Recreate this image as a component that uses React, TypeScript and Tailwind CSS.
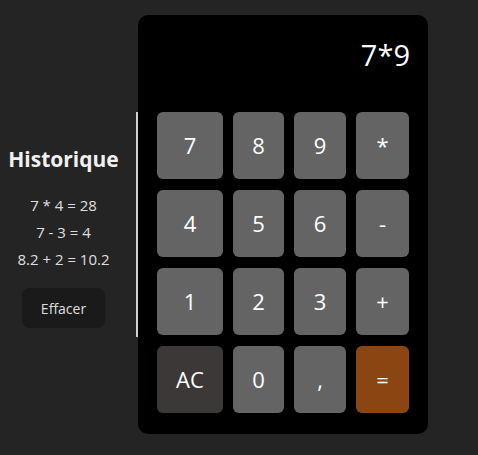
import React, { useState } from 'react'

const keys = ['7', '8', '9', '*', '4', '5', '6', '-', '1', '2', '3', '+', 'AC', '0', ',', '=']

function keyClass(k: string) {
  if (k === 'AC') return 'bg-[#3b3837]'
  if (k === '=') return 'bg-[#8b4513]'
  return 'bg-[#646464]'
}

export default function App() {
  const [display] = useState('7*9')
  const [history] = useState(['7 * 4 = 28', '7 - 3 = 4', '8.2 + 2 = 10.2'])

  return (
    <div
      className="min-h-screen bg-[#242424] text-[rgba(255,255,255,0.87)]"
      style={{ fontFamily: '"Open Sans", "Noto Sans", sans-serif' }}
    >
      <div className="flex items-center pt-[15px]">
        {/* history column */}
        <div className="flex h-[225px] w-[138px] flex-col items-center border-r-2 border-[#d0d0d0] pr-[9px] pt-[33px]">
          <h2 className="text-[21px] font-bold leading-[28px] text-[#f0f0f0]">Historique</h2>
          <ul className="mt-[19px] flex flex-col items-center">
            {history.map(h => (
              <li key={h} className="text-[15px] leading-[27px]">
                {h}
              </li>
            ))}
          </ul>
          <button className="mt-[15px] h-[40px] w-[83px] rounded-[8px] bg-[#1a1a1a] text-[14px]">Effacer</button>
        </div>

        {/* calculator */}
        <div className="flex h-[419px] w-[290px] flex-col rounded-[10px] bg-black px-[19px] pt-[16px]">
          <div className="-mr-[1px] h-[48px] text-right text-[29px] leading-[48px] text-white">{display}</div>
          <div className="mt-[33px] grid grid-cols-[66px_51px_52px_53px] grid-rows-[repeat(4,67px)] gap-x-[10px] gap-y-[11px]">
            {keys.map(k => (
              <button key={k} className={`${keyClass(k)} rounded-[6px] text-[22px] text-white`}>
                {k}
              </button>
            ))}
          </div>
        </div>
      </div>
    </div>
  )
}
